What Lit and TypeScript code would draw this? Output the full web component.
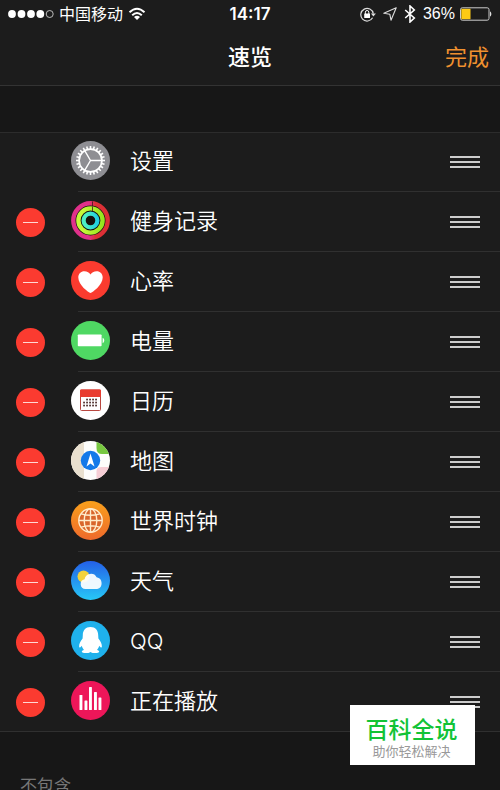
import { LitElement, html, svg, css, TemplateResult } from "lit";
import { customElement } from "lit/decorators.js";

const TEETH = Array.from({ length: 24 }, (_, i) => i * 15);
const DOTS = [
  [16, 18.5], [19, 18.5], [22, 18.5], [25, 18.5],
  [13, 21.5], [16, 21.5], [19, 21.5], [22, 21.5], [25, 21.5],
  [13, 24.5], [16, 24.5], [19, 24.5], [22, 24.5], [25, 24.5],
];
const BARS = [
  [8.5, 14, 29], [13.5, 19.5, 29], [18, 6, 29], [23, 11, 29], [27.5, 16.5, 29],
];

const icons: Record<string, TemplateResult> = {
  settings: svg`
    <circle cx="19.5" cy="19.5" r="19.5" fill="#8e8e93"/>
    <g stroke="#fff" fill="none">
      <circle cx="19.5" cy="19.5" r="11.4" stroke-width="1.7"/>
      ${TEETH.map((a) => svg`<path d="M19.5 8.2V5" stroke-width="1.6" transform=${`rotate(${a} 19.5 19.5)`}/>`)}
      <path d="M19.5 19.5H31M19.5 19.5L13.7 9.6M19.5 19.5L13.7 29.4" stroke-width="1.4"/>
    </g>`,
  activity: svg`
    <circle cx="19.5" cy="19.5" r="19.5" fill="#16120f"/>
    <g fill="none">
      <circle cx="19.5" cy="19.5" r="17.2" stroke="url(#ring-red)" stroke-width="4.4"/>
      <circle cx="19.5" cy="19.5" r="12.1" stroke="url(#ring-lime)" stroke-width="4.4"/>
      <circle cx="19.5" cy="19.5" r="6.9" stroke="url(#ring-cyan)" stroke-width="4.2"/>
      <path d="M21.5 .5v5M21.5 6v4.5" stroke="#401018" stroke-width=".8"/>
    </g>
    <defs>
      <linearGradient id="ring-red"><stop offset=".45" stop-color="#e0318b"/><stop offset=".65" stop-color="#dc3036"/></linearGradient>
      <linearGradient id="ring-lime"><stop offset=".2" stop-color="#c5f83a"/><stop offset="1" stop-color="#96e51e"/></linearGradient>
      <linearGradient id="ring-cyan"><stop offset=".2" stop-color="#4ceec6"/><stop offset="1" stop-color="#20cfe2"/></linearGradient>
    </defs>`,
  heart: svg`
    <circle cx="19.5" cy="19.5" r="19.5" fill="#fb3b2f"/>
    <path d="M19.5 32C17.5 31.3 7.3 24 7.3 16.4C7.3 12.6 10 10.2 13.3 10.2C16.2 10.2 18.4 11.6 19.5 13.4C20.6 11.6 22.8 10.2 25.7 10.2C29 10.2 31.7 12.6 31.7 16.4C31.7 24 21.5 31.3 19.5 32Z" fill="#fff"/>`,
  battery: svg`
    <circle cx="19.5" cy="19.5" r="19.5" fill="#4fd863"/>
    <rect x="6.8" y="13.5" width="23.8" height="11.8" rx=".8" fill="#fff"/>
    <path d="M31.6 16.8c2.2.8 2.2 4.6 0 5.4z" fill="#fff"/>`,
  calendar: svg`
    <circle cx="19.5" cy="19.5" r="19.5" fill="#fff"/>
    <rect x="9.5" y="9" width="20" height="20.5" rx="1" fill="#fff" stroke="#b94740"/>
    <path d="M9 16V9.5q0-1 1-1h19q1 0 1 1V16z" fill="#e93c30"/>
    ${DOTS.map(([x, y]) => svg`<rect x=${x - 0.8} y=${y - 0.8} width="1.7" height="1.7" fill="#492725"/>`)}`,
  maps: svg`
    <clipPath id="map-disc"><circle cx="19.5" cy="19.5" r="19.5"/></clipPath>
    <g clip-path="url(#map-disc)">
      <path d="M0 0h39v39H0z" fill="#fdfdfb"/>
      <path d="M0 0h13v39H0z" fill="#e9e0cf"/>
      <path d="M25.5 0H39v13h-8q-5.500 0-5.500-6z" fill="#78c840"/>
      <path d="M25.500 39V30q0-4 5-4H39v13z" fill="#f6ced5"/>
    </g>
    <circle cx="19.500" cy="19.500" r="9.700" fill="#1479e9"/>
    <path d="M19.500 12.500L23.500 25.500L19.500 22.500L15.500 25.500Z" fill="#fff"/>`,
  clock: svg`
    <defs><linearGradient id="clock-sky" x2="0" y2="1"><stop stop-color="#f9a01c"/><stop offset="1" stop-color="#ee6a2c"/></linearGradient></defs>
    <circle cx="19.5" cy="19.5" r="19.5" fill="url(#clock-sky)"/>
    <g fill="none" stroke="#ffeccb" stroke-width="1.4">
      <circle cx="19.5" cy="19.5" r="11.7" fill="#d9662c"/>
      <ellipse cx="19.5" cy="19.5" rx="6.3" ry="11.7"/>
      <path d="M19.500 7.800v23.400M7.800 19.500h23.400M10.200 12.800q9.300 3 18.600 0M10.200 26.200q9.300-3 18.600 0"/>
    </g>`,
  weather: svg`
    <defs><linearGradient id="day-sky" x2="0" y2="1"><stop stop-color="#2460e8"/><stop offset="1" stop-color="#27c8f6"/></linearGradient></defs>
    <circle cx="19.5" cy="19.5" r="19.5" fill="url(#day-sky)"/>
    <circle cx="12.500" cy="15.500" r="6" fill="#f2d23c"/>
    <path d="M14.500 28A4.900 4.900 0 0 1 13.600 18.300A6.400 6.400 0 0 1 25.600 16.300A6 6 0 0 1 26.200 28Z" fill="#fff" fill-opacity=".93"/>`,
  qq: svg`
    <circle cx="19.5" cy="19.5" r="19.5" fill="#1fb1ec"/>
    <path d="M19.500 6C14.600 6 11.800 9.500 11.800 14.200L11.600 17.500C9.500 20 8 22.700 8.100 25.500C8.200 27.500 9.500 26.500 10.800 24.800C11.200 26.500 12 27.800 13 28.900C11.500 29.300 10.800 30 10.800 30.700C10.900 32.500 17.500 32.600 19.500 30.900C21.500 32.600 28.100 32.500 28.200 30.700C28.200 30 27.500 29.300 26 28.900C27 27.800 27.800 26.500 28.200 24.800C29.500 26.500 30.800 27.500 30.900 25.500C31 22.700 29.500 20 27.400 17.500L27.200 14.200C27.200 9.500 24.400 6 19.500 6Z" fill="#fff"/>`,
  playing: svg`
    <circle cx="19.5" cy="19.5" r="19.5" fill="#ed1659"/>
    ${BARS.map(([x, a, b]) => svg`<rect x=${x} y=${a} width="2.900" height=${b - a} rx=".6" fill="#fff"/>`)}`,
};

const rows = [
  { id: "settings", label: "设置", fixed: true },
  { id: "activity", label: "健身记录" },
  { id: "heart", label: "心率" },
  { id: "battery", label: "电量" },
  { id: "calendar", label: "日历" },
  { id: "maps", label: "地图" },
  { id: "clock", label: "世界时钟" },
  { id: "weather", label: "天气" },
  { id: "qq", label: "QQ" },
  { id: "playing", label: "正在播放" },
];

@customElement("status-bar")
class StatusBar extends LitElement {
  static styles = css`
    :host {
      display: grid;
      grid-template-columns: 1fr auto 1fr;
      align-items: center;
      height: 28px;
      padding: 0 8px;
      font-size: 16px;
      line-height: 28px;
    }
    .side { display: flex; align-items: center; gap: 5px; }
    .end { justify-content: flex-end; gap: 7px; }
    .power { display: flex; align-items: center; gap: 4px; font-family: "Liberation Sans", sans-serif; }
    .time { font-size: 17px; font-weight: 600; }
    svg { display: block; flex: none; }
  `;
  render() {
    return html`
      <div class="side">
        <svg width="46" height="10" viewBox="0 0 46 10" aria-label="信号">
          ${[4, 13.5, 23, 32.3].map((x) => svg`<circle cx=${x} cy="5" r="3.900" fill="#fff"/>`)}
          <circle cx="41.700" cy="5" r="3.500" fill="none" stroke="#ccc" stroke-width=".9"/>
        </svg>
        <span>中国移动</span>
        <svg width="18" height="14" viewBox="0 0 18 14" fill="none" stroke="#fff" stroke-width="2" aria-label="Wi-Fi">
          <path d="M1.500 5.300Q9-1.800 16.500 5.300M4.200 8.200Q9 3.700 13.800 8.200"/>
          <path d="M6 10Q9 7.300 12 10L9 13Z" fill="#fff" stroke="none"/>
        </svg>
      </div>
      <span class="time">14:17</span>
      <div class="side end">
        <svg width="16" height="15" viewBox="0 0 16 15" aria-label="方向锁定">
          <path d="M12.600 10.800A6.300 6.300 0 1 1 13.300 6.600" fill="none" stroke="#ddd" stroke-width="1.200"/>
          <path d="M10.900 6.400h5L13.400 9.500z" fill="#ddd"/>
          <rect x="4.200" y="6.400" width="5.800" height="4.600" rx=".5" fill="#fff"/>
          <path d="M5.400 7V5.200a1.700 1.700 0 0 1 3.400 0V7" fill="none" stroke="#fff"/>
        </svg>
        <svg width="14" height="14" viewBox="0 0 14 14" aria-label="定位">
          <path d="M13.200 .8L.8 6.200L6.800 7.200L8 13.200Z" fill="none" stroke="#ddd" stroke-width="1.100" stroke-linejoin="round"/>
        </svg>
        <svg width="12" height="18" viewBox="0 0 12 18" aria-label="蓝牙">
          <path d="M1.200 5L10.300 13L6 17V1L10.300 5L1.200 13" fill="none" stroke="#fff" stroke-width="1.600"/>
        </svg>
        <div class="power">
          <span>36%</span>
          <svg width="33" height="14" viewBox="0 0 33 14" aria-label="电池">
            <rect x="1.500" y=".8" width="28.500" height="12.400" rx="1.800" fill="none" stroke="#ccc"/>
            <rect x="2.300" y="1.800" width="9.200" height="10.400" fill="#fdca14"/>
            <path d="M31 4.500c1.800.5 1.800 4.500 0 5z" fill="#ddd"/>
          </svg>
        </div>
      </div>
    `;
  }
}

@customElement("app-root")
class AppRoot extends LitElement {
  static styles = css`
    :host {
      display: block;
      height: 100vh;
      overflow: hidden;
      background: #171717;
      color: #fff;
      font-family: Inter, "Noto Sans CJK SC", sans-serif;
    }
    button { border: 0; padding: 0; background: none; color: inherit; font: inherit; cursor: pointer; }
    svg { display: block; }
    .top { background: #1c1c1c; border-bottom: 1px solid #333; }
    .nav {
      display: grid;
      grid-template-columns: 1fr auto 1fr;
      align-items: center;
      height: 57px;
      padding: 0 11px;
      font-size: 22px;
      line-height: 32px;
    }
    .title { grid-column: 2; margin: 0; font-size: 22px; font-weight: 500; }
    .done { justify-self: end; color: #f0912f; font-weight: 400; }
    .list {
      margin: 46px 0 0;
      padding: 0;
      list-style: none;
      background: #1c1c1c;
      border-top: 1px solid #2c2c2c;
      border-bottom: 1px solid #303030;
    }
    .row {
      display: grid;
      grid-template-columns: 36px 39px 1fr 30px;
      column-gap: 19px;
      align-items: center;
      height: 57px;
      padding: 0 20px 1px 16px;
      position: relative;
    }
    .row + .row { height: 59px; padding: 1px 20px 0 16px; }
    .row + .row::before {
      content: "";
      position: absolute;
      top: 0;
      left: 78px;
      right: 0;
      height: 1px;
      background: #303030;
    }
    .remove {
      display: grid;
      place-items: center;
      width: 29px;
      height: 29px;
      margin-top: 2px;
      border-radius: 50%;
      background: #fb3b30;
    }
    .remove::before { content: ""; width: 15px; height: 1px; background: #ffd8d4; }
    .icon { grid-column: 2; margin-bottom: 2px; width: 39px; height: 39px; }
    .label { padding-left: 1px; font-size: 22px; line-height: 33px; font-weight: 350; }
    .handle { display: grid; gap: 3px; width: 30px; }
    .handle i { height: 2px; background: #ccc; }
    .heading { margin: 42px 20px 0; font-size: 17px; line-height: 24px; font-weight: 400; color: #777; }
    .brand {
      position: fixed;
      right: 25px;
      bottom: 25px;
      box-sizing: border-box;
      width: 125px;
      height: 60px;
      padding: 11px 2px 0 0;
      background: #fff;
      text-align: center;
      white-space: nowrap;
    }
    .name { display: block; font-size: 23px; line-height: 28px; font-weight: 500; color: #12c336; }
    .motto { display: block; font-size: 13px; line-height: 14px; color: #999; }
  `;
  render() {
    return html`
      <header class="top">
        <status-bar></status-bar>
        <div class="nav">
          <h1 class="title">速览</h1>
          <button class="done">完成</button>
        </div>
      </header>
      <ul class="list">
        ${rows.map(
          (r) => html`<li class="row">
            ${r.fixed ? null : html`<button class="remove" aria-label=${"移除" + r.label}></button>`}
            <svg class="icon" viewBox="0 0 39 39" aria-hidden="true">${icons[r.id]}</svg>
            <span class="label">${r.label}</span>
            <button class="handle" aria-label=${"移动" + r.label}><i></i><i></i><i></i></button>
          </li>`
        )}
      </ul>
      <h2 class="heading">不包含</h2>
      <aside class="brand"><span class="name">百科全说</span><span class="motto">助你轻松解决</span></aside>
    `;
  }
}
